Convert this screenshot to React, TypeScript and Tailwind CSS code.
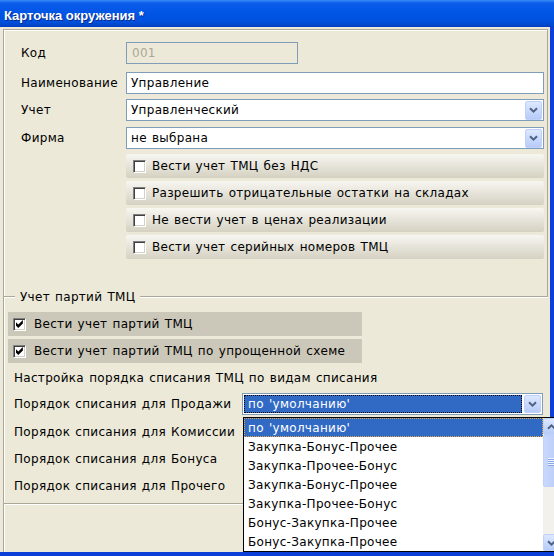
import type { ReactNode } from "react";

const ORDERS = [
  "по 'умолчанию'",
  "Закупка-Бонус-Прочее",
  "Закупка-Прочее-Бонус",
  "Закупка-Бонус-Прочее",
  "Закупка-Прочее-Бонус",
  "Бонус-Закупка-Прочее",
  "Бонус-Закупка-Прочее",
];

const SALE_ROWS = [
  { label: "Порядок списания для Комиссии", mt: "mt-[6px]" },
  { label: "Порядок списания для Бонуса", mt: "mt-[5px]" },
  { label: "Порядок списания для Прочего", mt: "mt-[5px]" },
];

function Chevron({ up = false }: { up?: boolean }) {
  return (
    <svg width="9" height="6" viewBox="0 0 9 6" className={up ? "rotate-180" : ""}>
      <path d="M1 1.2 L4.5 4.6 L8 1.2" fill="none" stroke="#4d6185" strokeWidth="2" />
    </svg>
  );
}

// кнопка в стиле XP (комбобокс, скроллбар)
function XpButton({ up, className = "" }: { up?: boolean; className?: string }) {
  return (
    <div
      className={`w-[17px] shrink-0 rounded-[2px] border border-[#bfd0fa] bg-gradient-to-b from-[#dde8ff] to-[#b7cbf8] flex items-center justify-center ${className}`}
    >
      <Chevron up={up} />
    </div>
  );
}

function Box({ checked = false }: { checked?: boolean }) {
  return (
    <span className="w-[13px] h-[13px] shrink-0 bg-white border border-t-[#808080] border-l-[#808080] border-b-white border-r-white shadow-[inset_1px_1px_0_#404040,inset_-1px_-1px_0_#d4d0c8] flex items-center justify-center">
      {checked && (
        <svg width="8" height="8" viewBox="0 0 7 7">
          <path d="M0 2 L2 4 L6 0 V3 L2 7 L0 5 Z" fill="#000" />
        </svg>
      )}
    </span>
  );
}

function Field({ label, children, className = "" }: { label: string; children: ReactNode; className?: string }) {
  return (
    <div className={`flex items-center h-[22px] ${className}`}>
      <span className="w-[105px] shrink-0">{label}</span>
      {children}
    </div>
  );
}

function Combo({ value }: { value: string }) {
  return (
    <div className="flex-1 h-[22px] border border-[#7f9db9] bg-white flex items-center pl-[4px] pr-[1px]">
      <span className="flex-1">{value}</span>
      <XpButton className="h-[19px]" />
    </div>
  );
}

function UpperCheck({ label, className = "" }: { label: string; className?: string }) {
  return (
    <div
      className={`ml-[105px] h-[24px] rounded-[2px] bg-gradient-to-b from-[#f7f6f1] to-[#d5d1c2] flex items-center gap-[6px] pl-[7px] ${className}`}
    >
      <Box />
      {label}
    </div>
  );
}

function LowerCheck({ label, className = "" }: { label: string; className?: string }) {
  return (
    <div className={`ml-[4px] w-[354px] h-[24px] bg-[#ccc8b9] flex items-center gap-[8px] pl-[5px] ${className}`}>
      <Box checked />
      {label}
    </div>
  );
}

function Etched({ className = "" }: { className?: string }) {
  return <span className={`h-[2px] border-t border-b border-t-[#aca899] border-b-white ${className}`} />;
}

function OrderList() {
  return (
    <div className="absolute left-0 top-[23px] z-10 w-[318px] h-[135px] border border-black bg-white flex">
      <div className="flex-1 flex flex-col">
        {ORDERS.map((o, i) => (
          <div
            key={i}
            className={`h-[19px] flex items-center pl-[3px] ${
              i === 0 ? "bg-[#316ac5] text-white border border-dotted border-[#e8a848]" : "border border-transparent"
            }`}
          >
            {o}
          </div>
        ))}
      </div>
      <div className="w-[17px] flex flex-col bg-[#f3f1ec]">
        <XpButton up className="h-[17px]" />
        <div className="h-[52px] rounded-[2px] border border-[#bfd0fa] bg-gradient-to-r from-[#c9d8fd] to-[#b8cbf8] flex items-center justify-center">
          <div className="flex flex-col gap-[1px]">
            {[0, 1, 2, 3].map((n) => (
              <span key={n} className="w-[7px] h-[1px] bg-[#eef4ff] shadow-[0_1px_0_#8ca6e4]" />
            ))}
          </div>
        </div>
        <div className="flex-1" />
        <XpButton className="h-[17px]" />
      </div>
    </div>
  );
}

export default function App() {
  return (
    <div className="w-[554px] h-[556px] overflow-hidden flex flex-col bg-[#0b3fd8] font-['DejaVu_Sans',sans-serif] text-[12px] tracking-[0.3px] [word-spacing:1px] text-black">
      <div className="h-[27px] shrink-0 pl-[4px] pt-[8px] bg-[linear-gradient(to_bottom,#3a8cf8_0px,#0b5ce9_3px,#0055e5_14px,#0050dc_22px,#0040c0_27px)] text-white font-bold font-['Liberation_Sans',sans-serif] text-[13px] leading-[15px] tracking-normal [word-spacing:0px] [text-shadow:1px_1px_0_#0b2a8a]">
        Карточка окружения *
      </div>

      <div className="flex-1 mr-[4px] mb-[4px] bg-[#ece9d8] pt-[2px] pl-[3px] pr-[2px] flex flex-col">
        <div className="flex-1 flex flex-col border-l border-[#aca899] shadow-[inset_1px_0_0_#fff]">
          {/* основные реквизиты */}
          <div className="h-[268px] shrink-0 border-t border-r border-[#aca899] shadow-[inset_1px_1px_0_#fff] pl-[17px] pr-[3px] pt-[12px] flex flex-col">
            <Field label="Код">
              <div className="w-[172px] h-[22px] border border-[#7f9db9] pl-[5px] flex items-center text-[#aca899]">001</div>
            </Field>
            <Field label="Наименование" className="mt-[8px]">
              <div className="flex-1 h-[22px] border border-[#7f9db9] bg-white pl-[4px] flex items-center">Управление</div>
            </Field>
            <Field label="Учет" className="mt-[5px]">
              <Combo value="Управленческий" />
            </Field>
            <Field label="Фирма" className="mt-[6px]">
              <Combo value="не выбрана" />
            </Field>
            <UpperCheck label="Вести учет ТМЦ без НДС" className="mt-[5px]" />
            <UpperCheck label="Разрешить отрицательные остатки на складах" className="mt-[3px]" />
            <UpperCheck label="Не вести учет в ценах реализации" className="mt-[3px]" />
            <UpperCheck label="Вести учет серийных номеров ТМЦ" className="mt-[3px]" />
          </div>

          {/* группа: учет партий */}
          <div className="-mt-[8px] h-[16px] flex items-center">
            <Etched className="w-[11px]" />
            <span className="px-[5px] bg-[#ece9d8]">Учет партий ТМЦ</span>
            <Etched className="flex-1" />
          </div>

          <LowerCheck label="Вести учет партий ТМЦ" className="mt-[7px]" />
          <LowerCheck label="Вести учет партий ТМЦ по упрощенной схеме" className="mt-[3px]" />

          <div className="mt-[4px] h-[22px] pl-[10px] flex items-center">
            Настройка порядка списания ТМЦ по видам списания
          </div>

          <div className="mt-[4px] h-[22px] pl-[10px] flex items-center">
            <span className="w-[228px] shrink-0">Порядок списания для Продажи</span>
            <div className="relative w-[301px] h-[22px] border border-[#7f9db9] bg-white flex items-center p-[1px] gap-[2px]">
              <div className="flex-1 h-full bg-[#316ac5] border border-dotted border-black text-white pl-[3px] flex items-center">
                по 'умолчанию'
              </div>
              <XpButton className="h-full" />
              <OrderList />
            </div>
          </div>

          {SALE_ROWS.map((r) => (
            <div key={r.label} className={`h-[22px] pl-[10px] flex items-center ${r.mt}`}>
              {r.label}
            </div>
          ))}

          <Etched className="mt-[6px] block" />
          <div className="flex-1" />
        </div>
      </div>
    </div>
  );
}
